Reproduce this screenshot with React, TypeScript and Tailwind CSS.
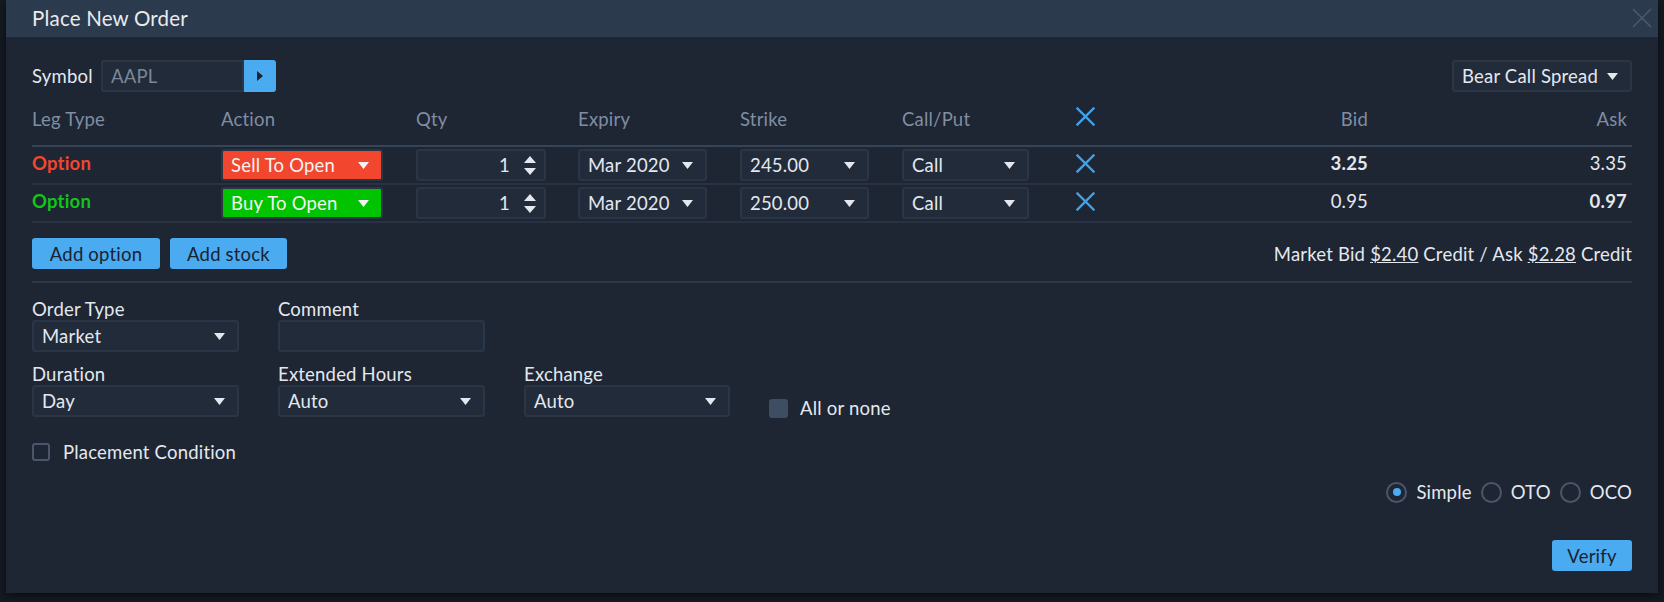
const Caret = () => (
  <svg width="11" height="7" viewBox="0 0 11 7" className="shrink-0">
    <path d="M0 0h11L5.5 7z" fill="currentColor" />
  </svg>
);

const BlueX = () => (
  <svg width="19" height="19" viewBox="0 0 19 19">
    <path d="M1.5 1.5l16 16M17.5 1.5l-16 16" stroke="#3fa3ec" strokeWidth="2.4" strokeLinecap="square" />
  </svg>
);

interface SelectProps {
  value: string;
  className: string;
}

const Select = ({ value, className }: SelectProps) => (
  <div
    className={`flex h-[32px] items-center justify-between rounded-[3px] border-2 pl-[8px] pr-[12px] ${className}`}
  >
    <span>{value}</span>
    <Caret />
  </div>
);

const QtyInput = () => (
  <div className="flex h-[32px] w-[130px] items-center justify-end rounded-[3px] border-2 border-[#2a3546] bg-[#222b3a] pr-[8px] text-[#e4e8ee]">
    <span className="mr-[14px]">1</span>
    <div className="flex flex-col gap-[5px] text-[#e4e8ee]">
      <svg width="12" height="7" viewBox="0 0 12 7">
        <path d="M0 7L6 0l6 7z" fill="currentColor" />
      </svg>
      <svg width="12" height="7" viewBox="0 0 12 7">
        <path d="M0 0h12L6 7z" fill="currentColor" />
      </svg>
    </div>
  </div>
);

const dark = "w-[129px] border-[#2a3546] bg-[#222b3a] text-[#e4e8ee]";

const legs = [
  {
    color: "text-[#f2462f]",
    action: "Sell To Open",
    actionCls: "w-[162px] border-[#2a3546] bg-[#f2462f] text-[#f3f3f3]",
    strike: "245.00",
    bid: "3.25",
    ask: "3.35",
    bidBold: true,
  },
  {
    color: "text-[#14c41a]",
    action: "Buy To Open",
    actionCls: "w-[162px] border-[#2a3546] bg-[#00c400] text-[#f3f3f3]",
    strike: "250.00",
    bid: "0.95",
    ask: "0.97",
    bidBold: false,
  },
];

const gridCols = "grid grid-cols-[189px_195px_162px_162px_162px_174px_40px_252px_1fr]";

const Radio = ({ label, on }: { label: string; on?: boolean }) => (
  <div className="flex items-center">
    <div className="flex h-[21px] w-[21px] items-center justify-center rounded-full border-2 border-[#4a5669]">
      {on && <div className="h-[8px] w-[8px] rounded-full bg-[#4aabf0]" />}
    </div>
    <span className="ml-[9px]">{label}</span>
  </div>
);

export default function App() {
  return (
    <div className="h-[602px] w-[1664px] bg-[#151a22] px-[6px] font-['Lato',sans-serif] text-[18.5px] leading-[22px] tracking-[0.2px] text-[#e4e8ee]">
      <div className="flex h-[593px] flex-col bg-[#1e2533] shadow-[0_2px_8px_rgba(0,0,0,0.6)]">
        <div className="flex h-[37px] shrink-0 items-center justify-between bg-[#2c3a4d] pl-[26px] pr-[6px]">
          <span className="mt-[-2px] text-[20.5px] text-[#e8ebf0]">Place New Order</span>
          <svg width="20" height="20" viewBox="0 0 20 20" className="mt-[-2px]">
            <path d="M1 1l18 18M19 1L1 19" stroke="#4d596b" strokeWidth="1.6" />
          </svg>
        </div>

        <div className="flex flex-1 flex-col px-[26px]">
          <div className="mt-[23px] flex h-[32px] items-center justify-between">
            <div className="flex items-center">
              <span className="w-[69px]">Symbol</span>
              <div className="flex h-[32px] w-[143px] items-center rounded-l-[3px] border-2 border-[#2a3546] bg-[#222b3a] pl-[8px] text-[#7c8797]">
                AAPL
              </div>
              <div className="flex h-[32px] w-[32px] items-center justify-center rounded-r-[3px] bg-[#4aabf0]">
                <svg width="6" height="10" viewBox="0 0 6 10">
                  <path d="M0 0l6 5-6 5z" fill="#1b2230" />
                </svg>
              </div>
            </div>
            <Select value="Bear Call Spread" className="w-[180px] border-[#2a3546] bg-[#222b3a] text-[#e4e8ee]" />
          </div>

          <div className={`${gridCols} h-[55px] items-center border-b-2 border-[#354457] text-[#7f8ea3]`}>
            <span>Leg Type</span>
            <span>Action</span>
            <span>Qty</span>
            <span>Expiry</span>
            <span>Strike</span>
            <span>Call/Put</span>
            <span className="mt-[-4px]">
              <BlueX />
            </span>
            <span className="text-right">Bid</span>
            <span className="pr-[5px] text-right">Ask</span>
          </div>

          {legs.map((leg) => (
            <div key={leg.action} className={`${gridCols} h-[38px] items-center border-b-2 border-[#283242]`}>
              <span className={`font-bold ${leg.color} mt-[-4px]`}>Option</span>
              <Select value={leg.action} className={leg.actionCls} />
              <QtyInput />
              <Select value="Mar 2020" className={dark} />
              <Select value={leg.strike} className={dark} />
              <Select value="Call" className="w-[127px] border-[#2a3546] bg-[#222b3a] text-[#e4e8ee]" />
              <span className="mt-[-4px]">
                <BlueX />
              </span>
              <span className={`mt-[-4px] text-right ${leg.bidBold ? "font-bold" : ""}`}>{leg.bid}</span>
              <span className={`mt-[-4px] pr-[5px] text-right ${leg.bidBold ? "" : "font-bold"}`}>{leg.ask}</span>
            </div>
          ))}

          <div className="mt-[15px] flex items-center justify-between">
            <div className="flex gap-[10px] text-[#1b2230]">
              <button className="h-[31px] w-[128px] rounded-[3px] bg-[#4aabf0]">Add option</button>
              <button className="h-[31px] w-[117px] rounded-[3px] bg-[#4aabf0]">Add stock</button>
            </div>
            <span>
              Market Bid <span className="underline">$2.40</span> Credit / Ask{" "}
              <span className="underline">$2.28</span> Credit
            </span>
          </div>

          <div className="mt-[12px] h-[2px] bg-[#2d3847]" />

          <div className="mt-[15px] flex gap-[39px]">
            <div className="flex w-[207px] flex-col">
              <span className="h-[22px]">Order Type</span>
              <Select value="Market" className="w-[207px] border-[#2a3546] bg-[#222b3a]" />
            </div>
            <div className="flex w-[207px] flex-col">
              <span className="h-[22px]">Comment</span>
              <div className="h-[32px] rounded-[3px] border-2 border-[#2a3546] bg-[#222b3a]" />
            </div>
          </div>

          <div className="mt-[11px] flex gap-[39px]">
            <div className="flex w-[207px] flex-col">
              <span className="h-[22px]">Duration</span>
              <Select value="Day" className="w-[207px] border-[#2a3546] bg-[#222b3a]" />
            </div>
            <div className="flex w-[207px] flex-col">
              <span className="h-[22px]">Extended Hours</span>
              <Select value="Auto" className="w-[207px] border-[#2a3546] bg-[#222b3a]" />
            </div>
            <div className="flex w-[206px] flex-col">
              <span className="h-[22px]">Exchange</span>
              <Select value="Auto" className="w-[206px] border-[#2a3546] bg-[#222b3a]" />
            </div>
            <div className="mb-[-8px] flex items-center self-end pb-[6px]">
              <div className="h-[19px] w-[19px] rounded-[3px] bg-[#3f4d63]" />
              <span className="ml-[12px]">All or none</span>
            </div>
          </div>

          <div className="mt-[24px] flex items-center">
            <div className="h-[18px] w-[18px] rounded-[3px] border-2 border-[#4a5669]" />
            <span className="ml-[13px]">Placement Condition</span>
          </div>

          <div className="mt-[18px] flex justify-end gap-[9px]">
            <Radio label="Simple" on />
            <Radio label="OTO" />
            <Radio label="OCO" />
          </div>

          <div className="mt-[37px] flex justify-end">
            <button className="h-[31px] w-[80px] rounded-[3px] bg-[#4aabf0] text-[#1b2230]">Verify</button>
          </div>
        </div>
      </div>
    </div>
  );
}
